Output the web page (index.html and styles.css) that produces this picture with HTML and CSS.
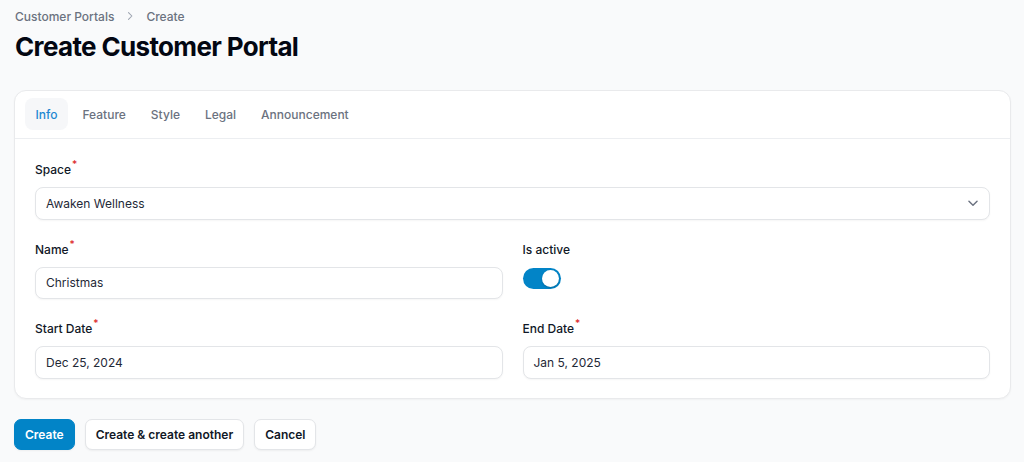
FILE: index.html
```html
<!DOCTYPE html>
<html lang="en">
<head>
<meta charset="utf-8">
<title>Create Customer Portal</title>
<link rel="stylesheet" href="styles.css">
</head>
<body>
<main class="page">
  <nav class="breadcrumbs">
    <span class="crumb">Customer Portals</span>
    <svg class="crumb-sep" viewBox="0 0 16 16" width="12" height="12"><path d="M6 3.5 10.5 8 6 12.5" fill="none" stroke="currentColor" stroke-width="1.4" stroke-linecap="round" stroke-linejoin="round"/></svg>
    <span class="crumb">Create</span>
  </nav>
  <h1 class="title">Create Customer Portal</h1>

  <section class="card">
    <div class="tabs">
      <button class="tab active">Info</button>
      <button class="tab">Feature</button>
      <button class="tab">Style</button>
      <button class="tab">Legal</button>
      <button class="tab">Announcement</button>
    </div>
    <div class="card-body">
      <div class="field full">
        <label class="label">Space<sup class="req">*</sup></label>
        <div class="input select">
          <span>Awaken Wellness</span>
          <svg class="chev" viewBox="0 0 20 20" width="18" height="18"><path d="M5.5 8 10 12.5 14.5 8" fill="none" stroke="currentColor" stroke-width="1.6" stroke-linecap="round" stroke-linejoin="round"/></svg>
        </div>
      </div>
      <div class="field">
        <label class="label">Name<sup class="req">*</sup></label>
        <div class="input"><span>Christmas</span></div>
      </div>
      <div class="field">
        <label class="label">Is active</label>
        <div class="toggle"><span class="knob"></span></div>
      </div>
      <div class="field">
        <label class="label">Start Date<sup class="req">*</sup></label>
        <div class="input"><span>Dec 25, 2024</span></div>
      </div>
      <div class="field">
        <label class="label">End Date<sup class="req">*</sup></label>
        <div class="input"><span>Jan 5, 2025</span></div>
      </div>
    </div>
  </section>

  <div class="actions">
    <button class="btn primary">Create</button>
    <button class="btn">Create &amp; create another</button>
    <button class="btn">Cancel</button>
  </div>
</main>
</body>
</html>
```

FILE: styles.css
```css
* { box-sizing: border-box; }
html, body { margin: 0; padding: 0; }
body {
  background: #f9fafb;
  font-family: Inter, "Noto Sans", "Liberation Sans", sans-serif;
  color: #111827;
  width: 1024px;
  height: 462px;
  overflow: hidden;
}
.page {
  padding: 6px 13px 0 14px;
}
.breadcrumbs {
  display: flex;
  align-items: center;
  gap: 10px;
  height: 20px;
  padding-left: 1px;
  font-size: 12px;
  font-weight: 500;
  color: #6b7280;
}
.crumb-sep { color: #9ca3af; }
.title {
  margin: 6px 0 0 1px;
  font-size: 26px;
  line-height: 30px;
  font-weight: 700;
  color: #030712;
  letter-spacing: -0.65px;
}
.card {
  margin-top: 28px;
  background: #fff;
  border: 1px solid #e9eaec;
  border-radius: 12px;
  box-shadow: 0 1px 2px rgba(0,0,0,0.04);
}
.tabs {
  display: flex;
  gap: 4px;
  padding: 7px 10px 8px;
  border-bottom: 1px solid #eceef1;
}
.tab {
  height: 32px;
  padding: 0 10.5px;
  border: 0;
  border-radius: 8px;
  background: transparent;
  font-family: inherit;
  font-size: 12px;
  font-weight: 500;
  color: #6b7280;
}
.tab.active {
  background: #f6f7f9;
  color: #1e88d2;
}
.card-body {
  display: grid;
  grid-template-columns: 1fr 1fr;
  column-gap: 20px;
  row-gap: 20px;
  padding: 21px 20px 19px;
}
.field { display: flex; flex-direction: column; gap: 7px; }
.field.full { grid-column: 1 / -1; }
.label {
  font-size: 12px;
  line-height: 20px;
  font-weight: 500;
  color: #111827;
}
.req {
  color: #dc2626;
  font-size: 10px;
  line-height: 0;
  margin-left: 1px;
  position: relative;
  top: -1px;
}
.input {
  height: 32.5px;
  display: flex;
  align-items: center;
  justify-content: space-between;
  padding: 0 10px;
  border: 1px solid #e3e5e8;
  border-radius: 8px;
  background: #fff;
  box-shadow: 0 1px 2px rgba(0,0,0,0.04);
  font-size: 12px;
  color: #1f2937;
}
.chev { color: #6b7280; margin-right: -3px; }
.toggle {
  width: 38px;
  height: 21px;
  margin-top: 1px;
  border-radius: 11px;
  background: #0284c7;
  display: flex;
  align-items: center;
  justify-content: flex-end;
  padding: 0 2px;
}
.knob {
  width: 17px;
  height: 17px;
  border-radius: 50%;
  background: #fff;
  box-shadow: 0 1px 2px rgba(0,0,0,0.2);
}
.actions {
  display: flex;
  gap: 10px;
  margin-top: 20px;
}
.btn {
  height: 31.5px;
  padding: 0 10px;
  border: 1px solid #e3e5e8;
  border-radius: 7px;
  background: #fff;
  box-shadow: 0 1px 2px rgba(0,0,0,0.05);
  font-family: inherit;
  font-size: 12px;
  font-weight: 600;
  color: #111827;
}
.btn.primary {
  background: #0284c7;
  border-color: #0284c7;
  color: #fff;
}
```
